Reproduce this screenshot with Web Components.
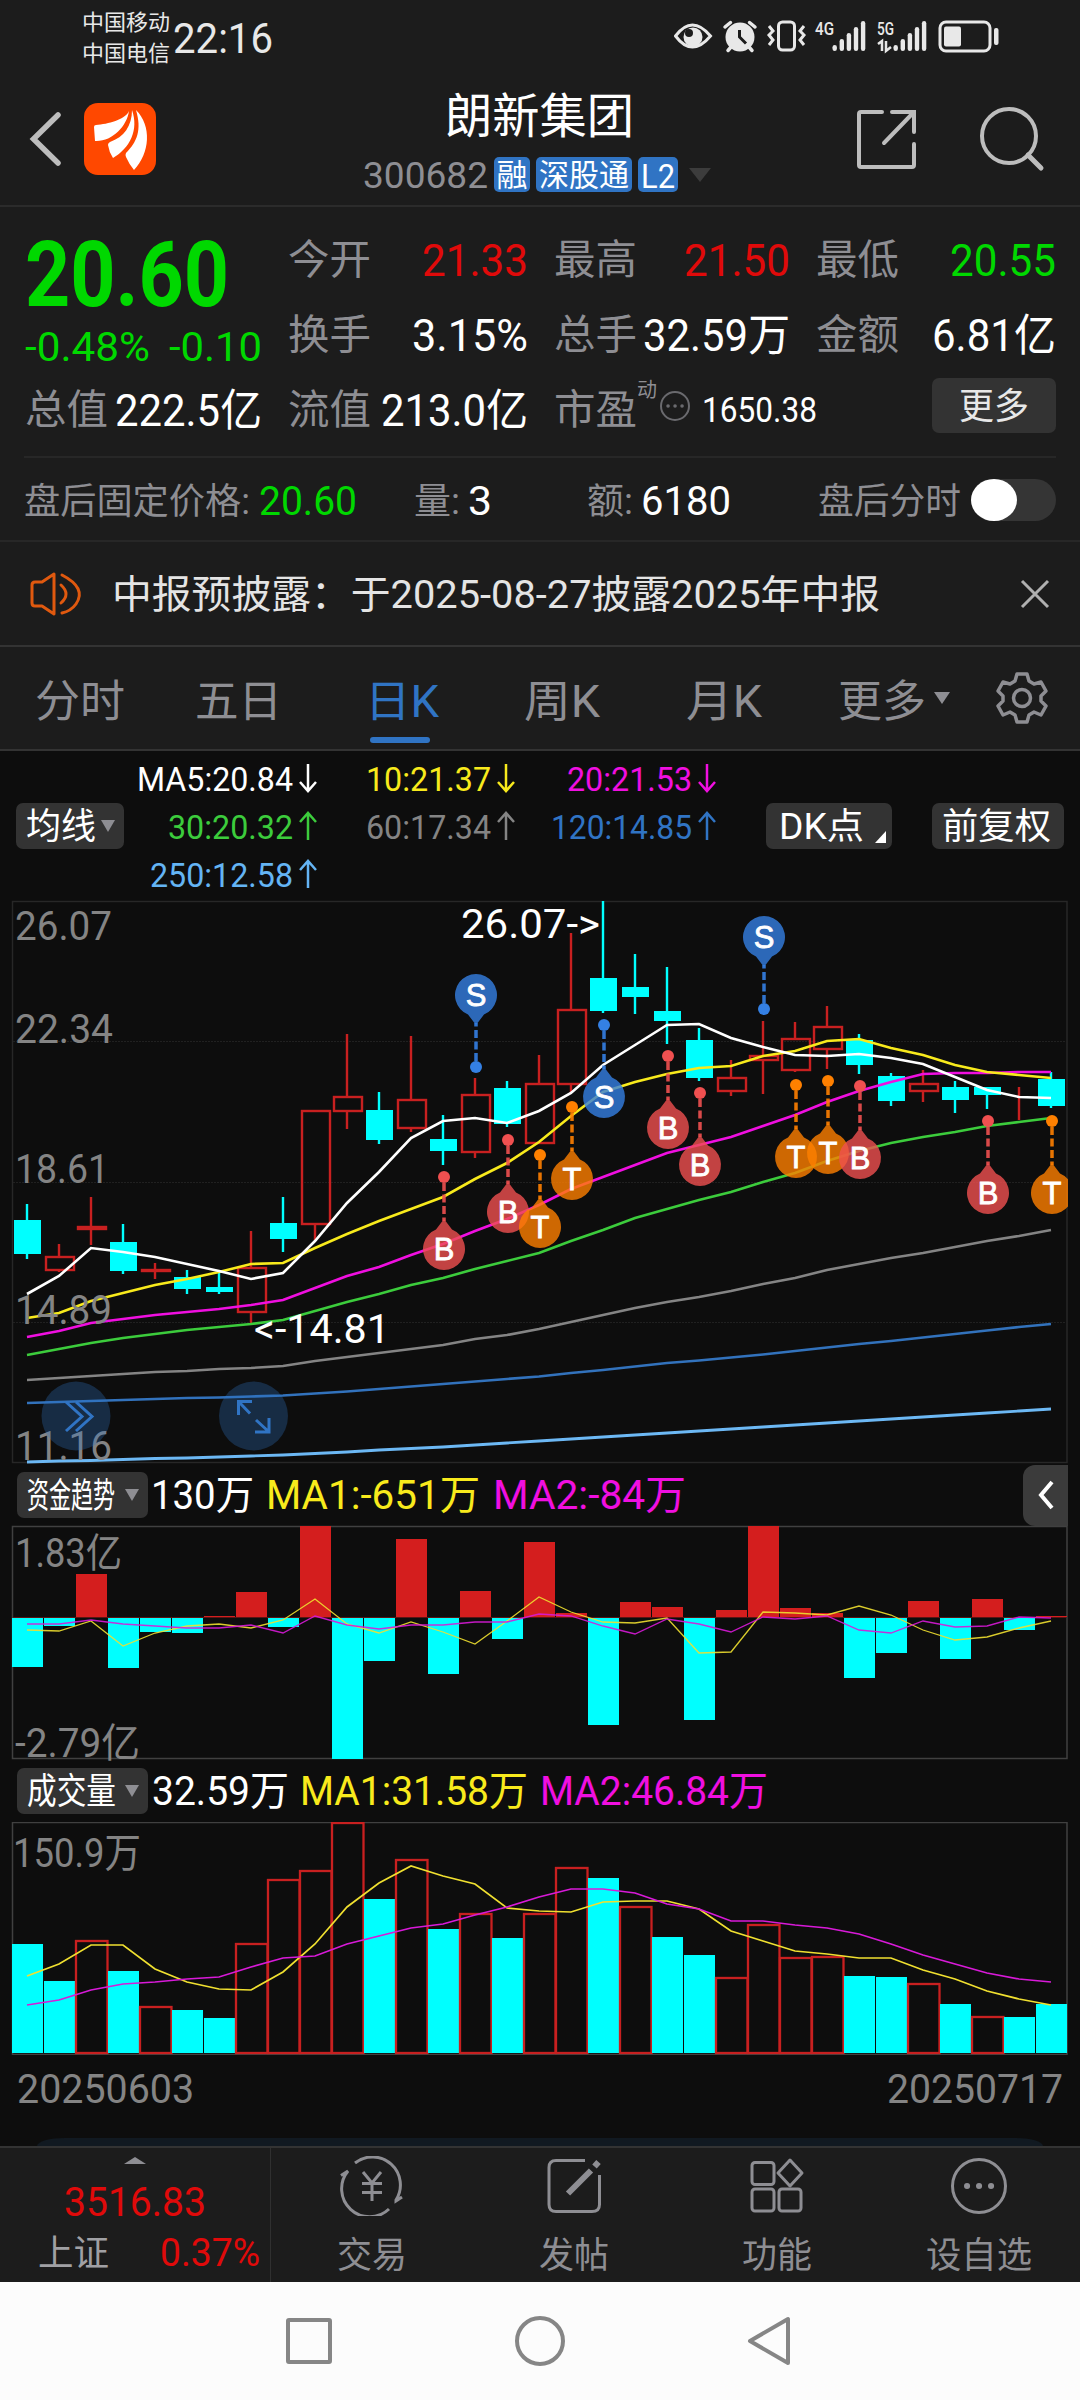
<!DOCTYPE html>
<html lang="zh-CN">
<head>
<meta charset="utf-8">
<title>朗新集团 300682</title>
<style>
  body {
    margin: 0;
    width: 1080px;
    height: 2400px;
    overflow: hidden;
    background-color: #0d0d0d;
    font-family: Roboto, "Noto Sans CJK SC", sans-serif;
  }
</style>
</head>
<body>
<stock-page></stock-page>

<script>
// Text squeezed or stretched to a fixed advance width
class FitText extends HTMLElement {
  constructor () {
    super()
    this.attachShadow({ mode: 'open' })
  }

  connectedCallback () {
    const size = this.getAttribute('s')
    this.shadowRoot.innerHTML = /* html */`
      <style>
        :host {
          display: block;
          flex: none;
          width: ${this.getAttribute('w')}px;
          height: ${size}px;
          font-size: ${size}px;
          line-height: ${size}px;
          white-space: nowrap;
        }

        span {
          display: inline-block;
          transform-origin: 0 50%;
        }
      </style>
      <span><slot></slot></span>
    `
    const span = this.shadowRoot.querySelector('span')
    const natural = span.getBoundingClientRect().width
    if (natural) span.style.transform = `translateY(1px) scaleX(${this.getAttribute('w') / natural})`
  }
}

class StatusBar extends HTMLElement {
  constructor () {
    super()
    this.attachShadow({ mode: 'open' })
  }

  connectedCallback () {
    const bars = (x) => [6, 12, 18, 24, 30]
      .map((h, i) => `<rect x="${x + i * 7.1}" y="${51 - h}" width="4.4" height="${h}" rx="2.2"/>`).join('')

    this.shadowRoot.innerHTML = /* html */`
      <style>
        :host {
          display: flex;
          align-items: center;
          height: 76px;
          box-sizing: border-box;
          padding-left: 82px;
          color: #e8e8e8;
        }

        .carriers {
          display: flex;
          flex-direction: column;
          gap: 9px;
          margin: 0 3px 2px 0;
        }

        svg {
          margin-left: auto;
        }
      </style>
      <div class="carriers">
        <fit-text w="88" s="22">中国移动</fit-text>
        <fit-text w="88" s="22">中国电信</fit-text>
      </div>
      <fit-text w="100" s="42">22:16</fit-text>
      <svg width="406" height="76" viewBox="0 0 406 76" fill="#e8e8e8">
        <path d="M1.500 36Q18 14 36.500 36Q18 58 1.500 36Z" fill="none" stroke="#e8e8e8" stroke-width="3"/>
        <circle cx="19" cy="37" r="9.500"/>
        <circle cx="15" cy="33" r="4" fill="#1c1c1c"/>
        <g transform="translate(66,37)">
          <circle r="14.500"/>
          <path d="M-15 -10L-9.500 -14.500M15 -10L9.500 -14.500M-9 10L-12 13.500M9 10L12 13.500" stroke="#e8e8e8" stroke-width="3.500" stroke-linecap="round"/>
          <path d="M-.5 -7V0L6 6.500" fill="none" stroke="#1c1c1c" stroke-width="3"/>
        </g>
        <rect x="104.500" y="22" width="16" height="28" rx="4" fill="none" stroke="#e8e8e8" stroke-width="3"/>
        <path d="M95 26l4 5l-4 4l4 5l-4 5M130 26l-4 5l4 4l-4 5l4 5" fill="none" stroke="#e8e8e8" stroke-width="3"/>
        <text x="141" y="35" font-size="19" font-weight="500" textLength="19" lengthAdjust="spacingAndGlyphs">4G</text>
        ${bars(158.500)}
        <text x="203" y="35" font-size="19" font-weight="500" textLength="17" lengthAdjust="spacingAndGlyphs">5G</text>
        ${bars(219.500)}
        <path d="M204 44l4 -3v10M212 41v10l5 -4" fill="none" stroke="#e8e8e8" stroke-width="2.500"/>
        <rect x="266" y="22" width="50" height="29" rx="6" fill="none" stroke="#e8e8e8" stroke-width="3"/>
        <rect x="270" y="26.500" width="17" height="20" rx="2"/>
        <rect x="320" y="28" width="4.500" height="17" rx="2"/>
      </svg>
    `
  }
}

class StockHeader extends HTMLElement {
  constructor () {
    super()
    this.attachShadow({ mode: 'open' })
  }

  connectedCallback () {
    this.shadowRoot.innerHTML = /* html */`
      <style>
        :host {
          display: grid;
          grid-template-columns: 180px 1fr 248px;
          height: 131px;
          box-sizing: border-box;
          border-bottom: 2px solid #2b2b2b;
        }

        .title {
          display: flex;
          flex-direction: column;
          align-items: flex-start;
          color: #fff;
          padding-top: 16px;
        }

        .title > fit-text {
          margin-left: 265px;
        }

        .code {
          display: flex;
          align-items: center;
          gap: 6px;
          margin: 16px 0 0 183px;
          color: #8e8e93;
        }

        .tag {
          display: flex;
          justify-content: center;
          align-items: center;
          height: 35px;
          border-radius: 5px;
          background-color: #3074c4;
          color: #fff;
        }

        .arrow {
          margin-left: 5px;
          border: 11px solid transparent;
          border-top: 14px solid #3c3c3c;
          border-bottom: 0;
        }
      </style>
      <svg width="180" height="129" viewBox="0 76 180 129">
        <path d="M58 115L33.500 139L58 163" fill="none" stroke="#bdbdbd" stroke-width="5.500" stroke-linecap="round"/>
        <rect x="84" y="103" width="72" height="72" rx="14" fill="#ff4800"/>
        <path d="M129 111C125 120 108 124 96 125Q94 125 94 127L95 141C112 142 127 126 129 111Z" fill="#fff"/>
        <path d="M132 110C132 126 124 137 110 142Q108 143 108 145Q109 152 113 158C130 148 139 130 132 110Z" fill="#fff"/>
        <path d="M136 110C142 130 137 142 126 153Q125 155 126 157Q129 164 134 170C150 153 152 126 136 110Z" fill="#fff"/>
      </svg>
      <div class="title">
        <fit-text w="189" s="48">朗新集团</fit-text>
        <div class="code">
          <fit-text w="125" s="37">300682</fit-text>
          <div class="tag" style="width:36px"><fit-text w="31" s="31">融</fit-text></div>
          <div class="tag" style="width:96px"><fit-text w="90" s="31">深股通</fit-text></div>
          <div class="tag" style="width:40px"><fit-text w="34" s="34">L2</fit-text></div>
          <div class="arrow"></div>
        </div>
      </div>
      <svg width="248" height="129" viewBox="832 76 248 129" fill="none" stroke="#bdbdbd" stroke-width="4">
        <path d="M882 112H861Q859 112 859 114V165Q859 167 861 167H912Q914 167 914 165V144M892 112H914V132M913 113L884 143" stroke-linecap="round"/>
        <circle cx="1009" cy="136" r="27"/>
        <path d="M1028 155L1041 168" stroke-width="5" stroke-linecap="round"/>
      </svg>
    `
  }
}

// Label on the left, value on the right
class QuoteCell extends HTMLElement {
  constructor () {
    super()
    this.attachShadow({ mode: 'open' })
    this.shadowRoot.innerHTML = /* html */`
      <style>
        :host {
          display: flex;
          justify-content: space-between;
          align-items: center;
          color: #8e8e93;
        }

        slot[name="value"] {
          display: block;
          color: #fff;
        }

        :host([trend="up"]) slot[name="value"] {
          color: #e00a0a;
        }

        :host([trend="down"]) slot[name="value"] {
          color: #00d800;
        }
      </style>
      <slot></slot>
      <slot name="value"></slot>
    `
  }
}

class QuotePanel extends HTMLElement {
  constructor () {
    super()
    this.attachShadow({ mode: 'open' })
  }

  connectedCallback () {
    const cell = (label, value, w, trend = '') => `
      <quote-cell trend="${trend}">
        <fit-text w="83" s="41">${label}</fit-text>
        <fit-text slot="value" w="${w}" s="44">${value}</fit-text>
      </quote-cell>`

    this.shadowRoot.innerHTML = /* html */`
      <style>
        :host {
          display: block;
          height: 335px;
          box-sizing: border-box;
          border-bottom: 2px solid #272727;
        }

        .grid {
          display: grid;
          grid-template-columns: 237px 240px 236px 240px;
          grid-template-rows: repeat(3, 75px);
          column-gap: 26px;
          padding: 15px 0 0 25px;
        }

        .price {
          grid-row: 1 / 3;
          color: #00d800;
          padding-top: 8px;
        }

        .price > fit-text {
          font-weight: 700;
        }

        .change {
          display: flex;
          justify-content: space-between;
          margin-top: 6px;
        }

        .pe {
          display: flex;
          align-items: center;
          color: #8e8e93;
        }

        .pe svg {
          flex: none;
        }

        .pe .sup {
          margin: 0 2px 42px 0;
        }

        .pe .num {
          margin-left: 11px;
          color: #fff;
        }

        .more {
          justify-self: end;
          align-self: center;
          display: flex;
          justify-content: center;
          align-items: center;
          width: 124px;
          height: 55px;
          margin-bottom: 8px;
          border-radius: 7px;
          background-color: #333;
          color: #e8e8e8;
        }

        .after {
          display: flex;
          align-items: center;
          height: 86px;
          margin: 9px 24px 0;
          border-top: 2px solid #272727;
          color: #8e8e93;
        }

        .toggle {
          width: 85px;
          height: 42px;
          margin: 0 0 2px 10px;
          border-radius: 21px;
          background-color: #353535;
        }

        .toggle::before {
          content: "";
          display: block;
          width: 46px;
          height: 42px;
          border-radius: 50%;
          background-color: #fff;
        }
      </style>
      <div class="grid">
        <div class="price">
          <fit-text w="204" s="90">20.60</fit-text>
          <div class="change">
            <fit-text w="125" s="41">-0.48%</fit-text>
            <fit-text w="93" s="41">-0.10</fit-text>
          </div>
        </div>
        ${cell('今开', '21.33', 106, 'up')}
        ${cell('最高', '21.50', 106, 'up')}
        ${cell('最低', '20.55', 106, 'down')}
        ${cell('换手', '3.15%', 116)}
        ${cell('总手', '32.59万', 147)}
        ${cell('金额', '6.81亿', 124)}
        ${cell('总值', '222.5亿', 147)}
        ${cell('流值', '213.0亿', 147)}
        <div class="pe">
          <fit-text w="83" s="41">市盈</fit-text>
          <fit-text class="sup" w="20" s="20">动</fit-text>
          <svg width="32" height="40" viewBox="0 0 32 40">
            <circle cx="16" cy="16" r="14" fill="none" stroke="#6a6a6e" stroke-width="2"/>
            <path d="M9 16h.1M16 16h.1M23 16h.1" stroke="#6a6a6e" stroke-width="3.500" stroke-linecap="round"/>
          </svg>
          <fit-text class="num" w="115" s="35">1650.38</fit-text>
        </div>
        <div class="more"><fit-text w="70" s="36">更多</fit-text></div>
      </div>
      <div class="after">
        <fit-text w="226" s="36">盘后固定价格:</fit-text>
        <fit-text style="margin-left:9px;color:#00d800" w="98" s="40">20.60</fit-text>
        <fit-text style="margin-left:57px" w="46" s="36">量:</fit-text>
        <fit-text style="margin-left:8px;color:#fff" w="24" s="40">3</fit-text>
        <fit-text style="margin-left:95px" w="46" s="36">额:</fit-text>
        <fit-text style="margin-left:8px;color:#fff" w="90" s="40">6180</fit-text>
        <fit-text style="margin-left:auto" w="143" s="36">盘后分时</fit-text>
        <div class="toggle"></div>
      </div>
    `
  }
}

class NoticeBar extends HTMLElement {
  constructor () {
    super()
    this.attachShadow({ mode: 'open' })
    this.shadowRoot.innerHTML = /* html */`
      <style>
        :host {
          display: flex;
          align-items: center;
          height: 105px;
          box-sizing: border-box;
          border-bottom: 2px solid #333;
          padding: 0 28px;
          color: #e4e4e4;
        }

        fit-text {
          margin: 2px 0 0 28px;
        }

        .close {
          margin-left: auto;
        }
      </style>
      <svg width="56" height="46" viewBox="0 0 56 46" fill="none" stroke="#e0590f" stroke-width="3" stroke-linejoin="round" stroke-linecap="round">
        <path d="M26 3L14 11H7Q4 11 4 14V32Q4 35 7 35H14L26 43Z"/>
        <path d="M33 14Q43 23 33 32M34 4Q59 17 48 33Q43 40 34 42"/>
      </svg>
      <fit-text w="768" s="39"><slot></slot></fit-text>
      <svg class="close" width="34" height="34" viewBox="0 0 34 34">
        <path d="M4 4L30 30M30 4L4 30" stroke="#b0b0b0" stroke-width="3"/>
      </svg>
    `
  }
}

class PeriodTabs extends HTMLElement {
  constructor () {
    super()
    this.attachShadow({ mode: 'open' })
    this.shadowRoot.innerHTML = /* html */`
      <style>
        :host {
          display: flex;
          align-items: center;
          height: 104px;
          box-sizing: border-box;
          border-bottom: 2px solid #333;
          padding-left: 35px;
          color: #8e8e93;
        }

        fit-text {
          margin-top: 6px;
        }

        .active {
          position: relative;
          color: #3074c4;
        }

        .active::after {
          content: "";
          position: absolute;
          left: 5px;
          top: 64px;
          width: 60px;
          height: 6px;
          border-radius: 3px;
          background-color: #3074c4;
        }

        .arrow {
          margin-left: 8px;
          border: 8px solid transparent;
          border-top: 12px solid #8e8e93;
          border-bottom: 0;
        }
      </style>
      <fit-text w="90" s="44">分时</fit-text>
      <fit-text style="margin-left:70px" w="87" s="44">五日</fit-text>
      <div class="active" style="margin-left:83px"><fit-text w="74" s="44">日K</fit-text></div>
      <fit-text style="margin-left:85px" w="76" s="44">周K</fit-text>
      <fit-text style="margin-left:86px" w="76" s="44">月K</fit-text>
      <fit-text style="margin-left:76px" w="88" s="44">更多</fit-text>
      <div class="arrow"></div>
      <svg style="margin-left:44px" width="56" height="56" viewBox="-28 -28 56 56" fill="none" stroke="#8e8e93" stroke-width="3.500" stroke-linejoin="round">
        <path d="M-5 -24H5L7 -17L12 -14L19 -16L24 -7L19 -2V3L24 8L19 17L12 14L7 17L5 24H-5L-7 17L-12 14L-19 17L-24 8L-19 3V-2L-24 -7L-19 -16L-12 -14L-7 -17Z"/>
        <circle r="8.500"/>
      </svg>
    `
  }
}

// Small grey button; the "menu" attribute adds a drop-down arrow
class ChipButton extends HTMLElement {
  constructor () {
    super()
    this.attachShadow({ mode: 'open' })
    this.shadowRoot.innerHTML = /* html */`
      <style>
        :host {
          display: flex;
          align-items: center;
          flex: none;
          height: 46px;
          box-sizing: border-box;
          padding-left: 10px;
          border-radius: 7px;
          background-color: #333;
          color: #fff;
        }

        .arrow {
          display: none;
          margin: 0 9px 0 auto;
          border: 7px solid transparent;
          border-top: 12px solid #8e8e93;
          border-bottom: 0;
        }

        :host([menu]) .arrow {
          display: block;
        }
      </style>
      <slot></slot>
      <div class="arrow"></div>
    `
  }
}

class MaLegend extends HTMLElement {
  constructor () {
    super()
    this.attachShadow({ mode: 'open' })
  }

  connectedCallback () {
    const item = (text, w, color, dir) => `
      <div class="item" style="color:${color}">
        <fit-text w="${w}" s="34">${text}</fit-text>
        <svg width="20" height="30" viewBox="0 0 20 30" fill="none" stroke="currentColor" stroke-width="2.500">
          <path d="${dir === 'down' ? 'M10 1V28M2 19L10 28L18 19' : 'M10 29V2M2 11L10 2L18 11'}"/>
        </svg>
      </div>`

    this.shadowRoot.innerHTML = /* html */`
      <style>
        :host {
          display: flex;
          align-items: center;
          height: 150px;
          padding: 0 16px;
        }

        .items {
          display: grid;
          grid-template-columns: 194px 198px 201px;
          grid-auto-rows: 48px;
          margin-right: 1px;
        }

        .item {
          display: flex;
          justify-content: flex-end;
          align-items: center;
          gap: 5px;
        }

        .dk {
          margin-left: 48px;
          padding-left: 13px;
        }

        .corner {
          align-self: flex-end;
          margin: 0 6px 6px 11px;
          border-left: 11px solid transparent;
          border-bottom: 12px solid #fff;
        }
      </style>
      <chip-button menu style="width:108px"><fit-text w="70" s="36">均线</fit-text></chip-button>
      <div class="items">
        ${item('MA5:20.84', 156, '#fff', 'down')}
        ${item('10:21.37', 125, '#f8ea1c', 'down')}
        ${item('20:21.53', 125, '#f00fe0', 'down')}
        ${item('30:20.32', 125, '#3ccc3c', 'up')}
        ${item('60:17.34', 125, '#848484', 'up')}
        ${item('120:14.85', 141, '#3074c4', 'up')}
        ${item('250:12.58', 143, '#64b4f4', 'up')}
      </div>
      <chip-button class="dk" style="width:126px"><fit-text w="85" s="36">DK点</fit-text><div class="corner"></div></chip-button>
      <chip-button style="width:132px;margin-left:auto"><fit-text w="109" s="36">前复权</fit-text></chip-button>
    `
  }
}

const STEP = 32
const points = (values, left = 27, top = 0) => values.map((v, i) => `${left + i * STEP},${top + v}`).join(' ')
const label = (x, y, w, text, color = '#848484') =>
  `<text x="${x}" y="${y}" font-size="40" fill="${color}" textLength="${w}" lengthAdjust="spacingAndGlyphs">${text}</text>`

class KlineChart extends HTMLElement {
  constructor () {
    super()
    this.attachShadow({ mode: 'open' })
  }

  // direction, high, body top, body bottom, low
  get candles () {
    return [
      ['d', 314, 330, 364, 369], ['u', 354, 367, 380, 382], ['u', 307, 337, 339, 355],
      ['d', 334, 352, 381, 384], ['u', 373, 380, 381, 389], ['d', 380, 387, 399, 404],
      ['d', 383, 397, 402, 404], ['u', 341, 378, 422, 433], ['d', 307, 333, 349, 362],
      ['u', 221, 221, 334, 350], ['u', 144, 207, 221, 239], ['d', 202, 220, 250, 254],
      ['u', 146, 210, 238, 242], ['d', 225, 249, 261, 275], ['u', 188, 205, 262, 268],
      ['d', 191, 198, 234, 237], ['u', 165, 194, 253, 253], ['u', 43, 120, 194, 203],
      ['d', 11, 88, 121, 123], ['d', 64, 97, 107, 124], ['d', 77, 121, 131, 154],
      ['d', 138, 150, 188, 191], ['u', 170, 188, 201, 206], ['u', 131, 166, 170, 204],
      ['u', 132, 149, 180, 182], ['u', 116, 137, 159, 179], ['d', 144, 150, 175, 184],
      ['d', 183, 186, 211, 216], ['u', 180, 194, 201, 212], ['d', 191, 197, 210, 223],
      ['d', 197, 197, 205, 219], ['u', 197, 213, 213, 230], ['d', 182, 189, 216, 218]
    ]
  }

  get averages () {
    return [
      ['#6cb8f4', 2.8, [572, 571, 570.5, 569.5, 568.5, 568, 567, 566, 565, 563.5, 562, 560, 558.5, 557, 555, 553, 551, 549, 547, 545, 543, 541, 539, 537, 535, 533, 531, 529, 527, 525, 523, 521, 519]],
      ['#3272bc', 2.6, [513, 512, 511, 510, 509, 508, 507.5, 506.5, 505.5, 503.5, 501.5, 499, 496.5, 494, 491.5, 489, 486.5, 483, 480, 476.5, 473, 470.500, 467.500, 464.500, 461, 457.500, 454, 451, 447.500, 444, 440.500, 437, 434]],
      ['#848484', 2.6, [490, 488, 486, 484, 482, 481, 479, 478, 476, 471, 467, 463, 459, 455, 449, 445, 439, 432, 425, 418, 412, 407, 401, 394, 388, 380, 374, 368, 363, 357, 351, 346, 340]],
      ['#3ccc3c', 2.6, [465, 459, 453, 448, 444, 440, 437, 434, 430, 421, 412, 404, 395, 388, 379, 371, 363, 351, 340, 328, 319, 310, 302, 292, 283, 271, 261, 253, 247, 242, 236, 232, 228]],
      ['#f00fe0', 2.6, [447, 441, 433, 429, 425, 422, 419, 415, 410, 398, 386, 377, 365, 354, 341, 329, 315, 299, 287, 275, 263, 255, 247, 236, 225, 212, 201, 192, 184, 183, 183, 182, 182]],
      ['#f8ea1c', 2.6, [428, 423, 411, 403, 395, 389, 382, 374, 373, 358, 344, 331, 319, 307, 289, 273, 252, 226, 202, 192, 184, 178, 176, 166, 161, 151, 149, 158, 165, 175, 182, 185, 188]],
      ['#ffffff', 2.6, [404, 386, 358, 362, 367, 374, 381, 389, 383, 351, 313, 282, 248, 231, 228, 233, 221, 203, 175, 155, 135, 134, 148, 157, 165, 166, 164, 168, 174, 187, 200, 207, 208]]
    ]
  }

  candle ([dir, high, top, bottom, low], i) {
    const x = 27 + i * STEP
    if (dir === 'd') {
      return `<path d="M${x} ${high}V${low}" stroke="#0ff" stroke-width="2.400"/>
        <rect x="${x - 13}" y="${top}" width="27" height="${bottom - top}" fill="#0ff"/>`
    }
    return `<path d="M${x} ${high}V${top}M${x} ${bottom}V${low}" stroke="#c82020" stroke-width="2.400"/>
      <rect x="${x - 13}" y="${top}" width="28" height="${bottom - top}" fill="none" stroke="#c82020" stroke-width="2.400"/>`
  }

  // side is 1 for a pin hanging below its dot, -1 for one above
  pin (letter, i, dot, side = 1) {
    const color = { B: '#f05050', S: '#3480e4', T: '#ff8000' }[letter]
    const x = 28 + i * STEP
    return `
      <g transform="translate(${x} ${dot})">
        <circle r="6" fill="${color}"/>
        <path d="M0 ${side * 6}V${side * 44}" stroke="${color}" stroke-opacity=".9" stroke-width="3.500" stroke-dasharray="8 3.500"/>
        <path d="M0 ${side * 42}L${side * 8} ${side * 52.500}A21 21 0 1 1 ${-side * 8} ${side * 52.500}Z" fill="${color}" fill-opacity=".8"/>
        <text y="${side * 72 + 11}" text-anchor="middle" font-family="Liberation Sans, sans-serif" font-size="31" fill="#fff" stroke="#fff" stroke-width=".8">${letter}</text>
      </g>`
  }

  connectedCallback () {
    this.shadowRoot.innerHTML = /* html */`
      <style>
        :host {
          display: block;
          height: 563px;
        }

        svg {
          display: block;
          overflow: visible;
        }
      </style>
      <svg width="1068" height="563" viewBox="0 11 1068 563">
        <clipPath id="frame"><rect x="12" y="11" width="1056" height="563"/></clipPath>
        <rect x="12.500" y="11.500" width="1054.500" height="561" fill="none" stroke="#272727" stroke-width="1.500"/>
        <path d="M13 151.500H1066M13 292.500H1066M13 432.500H1066" stroke="#202020" stroke-dasharray="2 1"/>
        ${this.candles.map(this.candle).join('')}
        ${this.averages.map(([color, width, values]) => `<polyline points="${points(values)}" fill="none" stroke="${color}" stroke-width="${width}"/>`).join('')}
        ${label(15, 50, 97, '26.07')}
        ${label(15, 153, 98, '22.34')}
        ${label(15, 293, 94, '18.61')}
        ${label(15, 434, 97, '14.89')}
        ${label(15, 570, 97, '11.16')}
        ${label(461, 48, 139, '26.07-&gt;', '#fff')}
        ${label(254, 453, 136, '&lt;-14.81', '#fff')}
        <g clip-path="url(#frame)">
          ${this.pin('B', 13, 287)}
          ${this.pin('S', 14, 177, -1)}
          ${this.pin('B', 15, 250)}
          ${this.pin('T', 16, 265)}
          ${this.pin('T', 17, 217)}
          ${this.pin('S', 18, 135)}
          ${this.pin('B', 20, 166)}
          ${this.pin('B', 21, 203)}
          ${this.pin('S', 23, 119, -1)}
          ${this.pin('T', 24, 195)}
          ${this.pin('T', 25, 191)}
          ${this.pin('B', 26, 196)}
          ${this.pin('B', 30, 231)}
          ${this.pin('T', 32, 231)}
        </g>
        <g fill="none" stroke="#3074c4" stroke-width="3">
          <circle cx="76" cy="526" r="34.500" fill="#3074c4" fill-opacity=".3" stroke="none"/>
          <path d="M66 512L82 526.500L66 541M76 512L92 526.500L76 541"/>
          <circle cx="253.500" cy="526" r="34.500" fill="#3074c4" fill-opacity=".3" stroke="none"/>
          <path d="M252 511.500H238.500V525M239 512L250 523.500M255 542H269V528M256 530L268 541"/>
        </g>
      </svg>
    `
  }
}

class IndicatorHead extends HTMLElement {
  constructor () {
    super()
    this.attachShadow({ mode: 'open' })
    this.shadowRoot.innerHTML = /* html */`
      <style>
        :host {
          display: flex;
          align-items: center;
          height: 62px;
          padding-left: 17px;
        }
      </style>
      <chip-button menu style="width:131px"><slot name="name"></slot></chip-button>
      <slot></slot>
    `
  }
}

class FlowChart extends HTMLElement {
  constructor () {
    super()
    this.attachShadow({ mode: 'open' })
  }

  connectedCallback () {
    const flow = [-49, -8, 43, -50, -14, -15, 1, 25, -9, 91, -141, -43, 78, -56, 26, -21, 75, 4, -107, 15, 10, -102, 7, 91, 9, 4, -60, -35, 16, -41, 18, -12, 1]
    const ma1 = [104, 105, 95, 120, 107, 100, 98, 102, 94, 73, 98, 107, 96, 106, 118, 95, 71, 86, 96, 97, 92, 127, 126, 86, 87, 89, 80, 89, 104, 114, 111, 102, 95]
    const ma2 = [98, 98, 94, 98, 100, 102, 102, 99, 107, 90, 99, 103, 99, 99, 96, 96, 88, 90, 100, 108, 93, 98, 106, 91, 93, 90, 104, 107, 95, 101, 100, 91, 92]

    this.shadowRoot.innerHTML = /* html */`
      <style>
        :host {
          display: block;
          height: 233px;
        }

        svg {
          display: block;
          overflow: visible;
        }
      </style>
      <svg width="1080" height="233" viewBox="0 0 1080 233">
        <rect x="12.500" y=".5" width="1054.500" height="232" fill="none" stroke="#404040" stroke-width="1.500"/>
        <path d="M13 91.500H1066" stroke="#5a1414"/>
        ${flow.map((v, i) => `<rect x="${12 + i * STEP}" y="${v > 0 ? 91 - v : 92}" width="31" height="${Math.abs(v)}" fill="${v > 0 ? '#d41e1e' : '#0ff'}"/>`).join('')}
        <polyline points="${points(ma1)}" fill="none" stroke="#f0e030" stroke-opacity=".9" stroke-width="1.300"/>
        <polyline points="${points(ma2)}" fill="none" stroke="#d81ad8" stroke-opacity=".9" stroke-width="1.300"/>
        ${label(15, 41, 107, '1.83亿')}
        ${label(15, 231, 125, '-2.79亿')}
      </svg>
    `
  }
}

class VolumeChart extends HTMLElement {
  constructor () {
    super()
    this.attachShadow({ mode: 'open' })
  }

  connectedCallback () {
    // bar tops; a leading minus marks a falling day
    const tops = [-122, -159, 118, -149, 184, -188, -196, 121, 57, 48, 0, -77, 37, -107, 91, -116, 91, 45, -56, 84, -115, -133, 155, 102, 135, 134, -154, -155, 161, -182, 194, -195, -182]
    const ma1 = [154, 142, 123, 123, 147, 160, 167, 168, 150, 122, 85, 61, 44, 54, 62, 86, 89, 90, 80, 79, 79, 87, 109, 119, 129, 132, 136, 136, 148, 157, 169, 177, 183]
    const ma2 = [183, 178, 168, 162, 160, 157, 155, 145, 136, 134, 122, 114, 106, 102, 93, 85, 75, 67, 67, 71, 82, 87, 99, 99, 103, 106, 112, 122, 133, 142, 151, 157, 160]
    const bar = (v, i) => v < 0
      ? `<rect x="${12 + i * STEP}" y="${-v}" width="31" height="${231 + v}" fill="#0ff"/>`
      : `<rect x="${12 + i * STEP}" y="${v + 1}" width="31.500" height="${230 - v}" fill="none" stroke="#c82020" stroke-width="2.300"/>`

    this.shadowRoot.innerHTML = /* html */`
      <style>
        :host {
          display: block;
          height: 233px;
        }

        svg {
          display: block;
        }
      </style>
      <svg width="1080" height="233" viewBox="0 0 1080 233">
        <rect x="12.500" y=".5" width="1054.500" height="232" fill="none" stroke="#404040" stroke-width="1.500"/>
        ${tops.map(bar).join('')}
        <polyline points="${points(ma1)}" fill="none" stroke="#f0e030" stroke-width="1.700"/>
        <polyline points="${points(ma2)}" fill="none" stroke="#d81ad8" stroke-width="1.700"/>
        ${label(13, 45, 128, '150.9万')}
      </svg>
    `
  }
}

class BottomItem extends HTMLElement {
  constructor () {
    super()
    this.attachShadow({ mode: 'open' })
    this.shadowRoot.innerHTML = /* html */`
      <style>
        :host {
          display: flex;
          flex: 1;
          flex-direction: column;
          align-items: center;
          gap: 21px;
          padding-top: 8px;
          color: #8e8e93;
        }
      </style>
      <slot name="icon"></slot>
      <slot></slot>
    `
  }
}

class BottomBar extends HTMLElement {
  constructor () {
    super()
    this.attachShadow({ mode: 'open' })
    this.shadowRoot.innerHTML = /* html */`
      <style>
        :host {
          display: flex;
          height: 136px;
          box-sizing: border-box;
          border-top: 2px solid #333;
          background-color: #1c1c1c;
        }

        .index {
          display: flex;
          flex-direction: column;
          align-items: center;
          width: 271px;
          box-sizing: border-box;
          border-right: 1px solid #303030;
          color: #e00a0a;
        }

        .caret {
          margin: 9px 0 18px;
          border: 11px solid transparent;
          border-bottom: 7px solid #8e8e93;
          border-top: 0;
        }

        .row {
          display: flex;
          justify-content: space-between;
          align-items: center;
          width: 222px;
          margin: 11px 0 0 28px;
        }

        svg {
          fill: none;
          stroke: #8e8e93;
          stroke-width: 3;
        }
      </style>
      <div class="index">
        <div class="caret"></div>
        <fit-text w="142" s="40">3516.83</fit-text>
        <div class="row">
          <fit-text style="color:#a0a0a4" w="71" s="36">上证</fit-text>
          <fit-text w="100" s="39">0.37%</fit-text>
        </div>
      </div>
      <bottom-item>
        <svg slot="icon" width="68" height="60" viewBox="-34 -30 68 60">
          <path d="M-17 -23A28 28 0 0 1 24 14L24 15L30 11M17 23A28 28 0 0 1 -24 -15L-31 -10.500"/>
          <path d="M-9 -14L0 -3L9 -14M-10 -2.500H10M-10 6.500H10M0 -3V15"/>
        </svg>
        <fit-text w="70" s="36">交易</fit-text>
      </bottom-item>
      <bottom-item>
        <svg slot="icon" width="68" height="60" viewBox="-34 -30 68 60">
          <path d="M11 -25.500H-18Q-25 -25.500 -25 -18.500V18.500Q-25 25.500 -18 25.500H18Q25.500 25.500 25.500 18.500V-11"/>
          <path d="M24.500 -24L20.500 -19.500M17 -15.500L-6 7.500" stroke-width="6"/>
        </svg>
        <fit-text w="70" s="36">发帖</fit-text>
      </bottom-item>
      <bottom-item>
        <svg slot="icon" width="68" height="60" viewBox="-34 -30 68 60">
          <rect x="-25" y="-23.500" width="22" height="22" rx="3"/>
          <rect x="-25" y="3" width="22" height="22" rx="3"/>
          <rect x="2" y="3" width="22" height="22" rx="3"/>
          <path d="M13 -26L25 -13L13 0L1 -13Z" stroke-linejoin="round"/>
        </svg>
        <fit-text w="70" s="36">功能</fit-text>
      </bottom-item>
      <bottom-item>
        <svg slot="icon" width="68" height="60" viewBox="-34 -30 68 60">
          <circle r="26.500"/>
          <path d="M-12 0h.1M0 0h.1M12 0h.1" stroke-width="6" stroke-linecap="round"/>
        </svg>
        <fit-text w="106" s="36">设自选</fit-text>
      </bottom-item>
    `
  }
}

class SystemNav extends HTMLElement {
  constructor () {
    super()
    this.attachShadow({ mode: 'open' })
    this.shadowRoot.innerHTML = /* html */`
      <style>
        :host {
          display: flex;
          justify-content: center;
          align-items: center;
          gap: 170px;
          height: 118px;
          background-color: #fcfcfc;
        }

        svg {
          fill: none;
          stroke: #868686;
          stroke-width: 4;
          stroke-linejoin: round;
        }
      </style>
      <svg width="60" height="60" viewBox="-30 -30 60 60"><rect x="-22" y="-21" width="42" height="42" rx="1"/></svg>
      <svg width="60" height="60" viewBox="-30 -30 60 60"><circle r="23"/></svg>
      <svg width="60" height="60" viewBox="-30 -30 60 60"><path d="M18 -22V22L-20 0Z"/></svg>
    `
  }
}

class StockPage extends HTMLElement {
  constructor () {
    super()
    this.attachShadow({ mode: 'open' })
    this.shadowRoot.innerHTML = /* html */`
      <style>
        :host {
          display: flex;
          flex-direction: column;
          width: 1080px;
          height: 2400px;
        }

        .top {
          background-color: #1c1c1c;
        }

        .collapse {
          display: flex;
          justify-content: center;
          align-items: center;
          width: 45px;
          height: 61px;
          margin: 0 12px 0 auto;
          border-radius: 12px 0 0 12px;
          background-color: #3b3b3b;
        }

        .yellow {
          color: #f8ea1c;
        }

        .magenta {
          color: #f00fe0;
        }

        .white {
          color: #fff;
        }

        .dates {
          display: flex;
          justify-content: space-between;
          align-items: center;
          height: 68px;
          padding: 0 17px;
          color: #848484;
        }

        .peek {
          height: 8px;
          margin: auto 37px 0;
          border-radius: 28px 28px 0 0 / 8px 8px 0 0;
          background-color: #111921;
        }
      </style>
      <div class="top">
        <status-bar></status-bar>
        <stock-header></stock-header>
        <quote-panel></quote-panel>
        <notice-bar>中报预披露：于2025-08-27披露2025年中报</notice-bar>
        <period-tabs></period-tabs>
      </div>
      <ma-legend></ma-legend>
      <kline-chart></kline-chart>
      <indicator-head>
        <fit-text slot="name" w="88" s="35">资金趋势</fit-text>
        <fit-text class="white" style="margin-left:3px" w="103" s="40">130万</fit-text>
        <fit-text class="yellow" style="margin-left:12px" w="214" s="40">MA1:-651万</fit-text>
        <fit-text class="magenta" style="margin-left:13px" w="193" s="40">MA2:-84万</fit-text>
        <div class="collapse">
          <svg width="20" height="32" viewBox="0 0 20 32"><path d="M16 3L5 16L16 29" fill="none" stroke="#fff" stroke-width="4"/></svg>
        </div>
      </indicator-head>
      <flow-chart></flow-chart>
      <indicator-head style="height:63px">
        <fit-text slot="name" w="89" s="36">成交量</fit-text>
        <fit-text class="white" style="margin-left:4px" w="137" s="40">32.59万</fit-text>
        <fit-text class="yellow" style="margin-left:11px" w="228" s="40">MA1:31.58万</fit-text>
        <fit-text class="magenta" style="margin-left:12px" w="228" s="40">MA2:46.84万</fit-text>
      </indicator-head>
      <volume-chart></volume-chart>
      <div class="dates">
        <fit-text w="177" s="40">20250603</fit-text>
        <fit-text w="176" s="40">20250717</fit-text>
      </div>
      <div class="peek"></div>
      <bottom-bar></bottom-bar>
      <system-nav></system-nav>
    `
  }
}

customElements.define('fit-text', FitText)
customElements.define('status-bar', StatusBar)
customElements.define('stock-header', StockHeader)
customElements.define('quote-cell', QuoteCell)
customElements.define('quote-panel', QuotePanel)
customElements.define('notice-bar', NoticeBar)
customElements.define('period-tabs', PeriodTabs)
customElements.define('chip-button', ChipButton)
customElements.define('ma-legend', MaLegend)
customElements.define('kline-chart', KlineChart)
customElements.define('indicator-head', IndicatorHead)
customElements.define('flow-chart', FlowChart)
customElements.define('volume-chart', VolumeChart)
customElements.define('bottom-item', BottomItem)
customElements.define('bottom-bar', BottomBar)
customElements.define('system-nav', SystemNav)
customElements.define('stock-page', StockPage)
</script>
</body>
</html>
